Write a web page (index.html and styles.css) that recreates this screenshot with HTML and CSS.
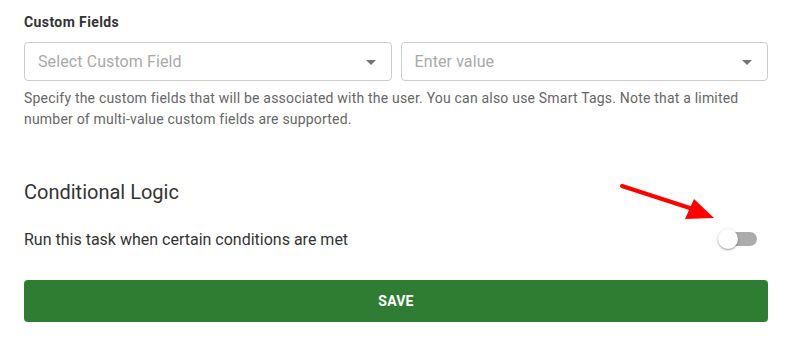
FILE: index.html
```html
<!DOCTYPE html>
<html>
<head>
<meta charset="utf-8">
<link rel="stylesheet" href="styles.css">
</head>
<body>
<div class="page">
  <div class="field-label">Custom Fields</div>
  <div class="select-row">
    <div class="select">
      <span class="placeholder">Select Custom Field</span>
      <span class="caret"></span>
    </div>
    <div class="select">
      <span class="placeholder">Enter value</span>
      <span class="caret"></span>
    </div>
  </div>
  <p class="help">Specify the custom fields that will be associated with the user. You can also use Smart Tags. Note that a limited number of multi-value custom fields are supported.</p>

  <h2 class="section-title">Conditional Logic</h2>
  <div class="toggle-row">
    <span class="toggle-text">Run this task when certain conditions are met</span>
    <span class="switch"><span class="track"></span><span class="thumb"></span></span>
    <svg class="arrow" width="110" height="50" viewBox="0 0 110 50">
      <line x1="4" y1="4" x2="78" y2="28" stroke="#ff0000" stroke-width="4" stroke-linecap="round"/>
      <polygon points="96,36 67,37 76,17" fill="#ff0000"/>
    </svg>
  </div>

  <button class="save">SAVE</button>
</div>
</body>
</html>
```
FILE: styles.css
```css
* { box-sizing: border-box; }
html, body { margin: 0; padding: 0; background: #fff; }
body { font-family: Roboto, "Liberation Sans", Arial, sans-serif; color: #333; }
.page { padding: 12px 25px 0 24px; width: 793px; }
.field-label { font-size: 14px; font-weight: 700; line-height: 20px; color: #333; letter-spacing: 0.4px; }
.select-row { display: flex; gap: 9px; margin-top: 10px; }
.select {
  flex: 1; height: 39px; border: 1px solid #cccccc; border-radius: 4px;
  display: flex; align-items: center; justify-content: space-between;
  padding: 0 15px 0 13px;
}
.placeholder { font-size: 16px; color: #a9a9a9; letter-spacing: 0.1px; }
.caret {
  width: 0; height: 0; border-left: 5px solid transparent; border-right: 5px solid transparent;
  border-top: 5px solid #757575; margin-top: 1px;
}
.help { margin: 7px 0 0 0; font-size: 14px; line-height: 21px; color: #666; letter-spacing: 0.2px; }
.section-title { margin: 49px 0 0 0; font-size: 20px; font-weight: 400; line-height: 26px; color: #333; }
.toggle-row { position: relative; display: flex; align-items: center; justify-content: space-between; margin-top: 22px; height: 24px; }
.toggle-text { font-size: 16px; color: #333; }
.switch { position: relative; width: 39px; height: 20px; margin-right: 11px; }
.track { position: absolute; right: 0; top: 3px; width: 33px; height: 14px; border-radius: 7px; background: #acacac; }
.thumb { position: absolute; left: 0; top: 0; width: 20px; height: 20px; border-radius: 50%; background: #fff;
  box-shadow: 0 1px 3px rgba(0,0,0,0.3), 0 1px 1px rgba(0,0,0,0.14); }
.arrow { position: absolute; left: 594px; top: -45px; }
.save {
  display: block; width: 744px; height: 42px; margin-top: 29px; border: 0; border-radius: 4px;
  background: #2e7d32; color: #fff; font-family: Roboto, "Liberation Sans", Arial, sans-serif;
  font-size: 14px; font-weight: 700; letter-spacing: 0.2px; cursor: pointer;
}
```
